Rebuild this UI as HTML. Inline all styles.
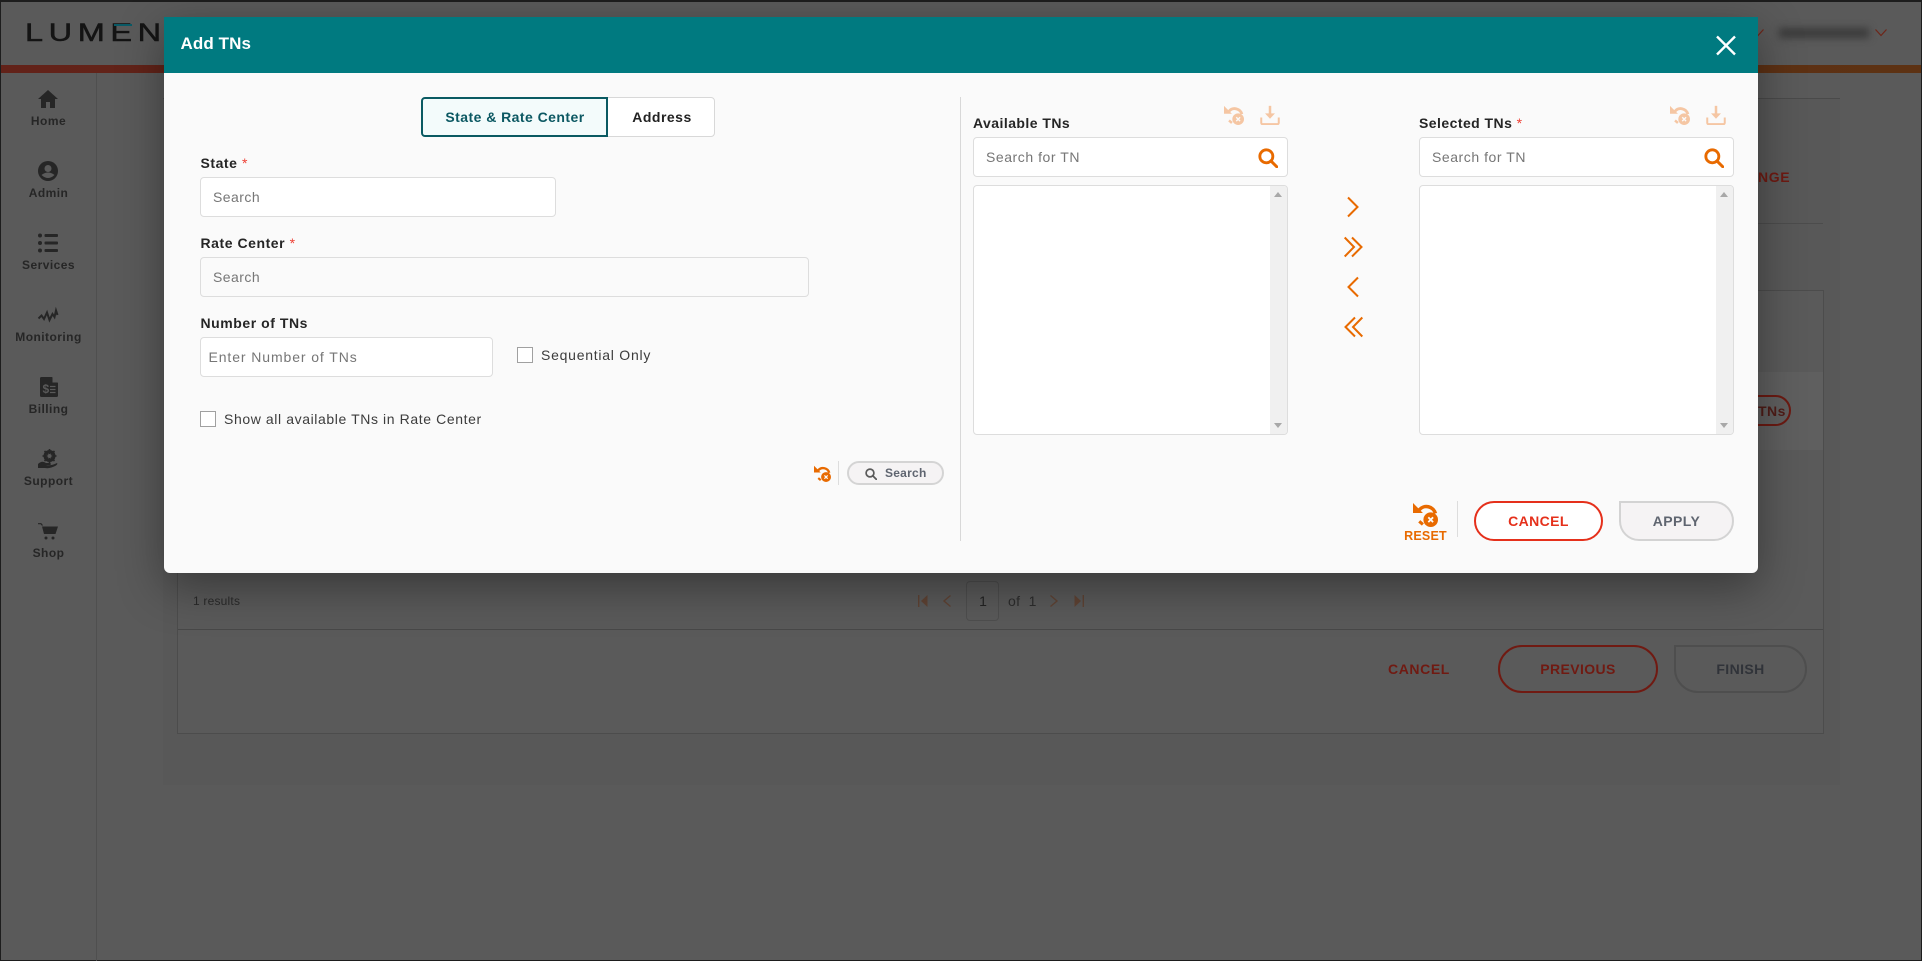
<!DOCTYPE html>
<html><head><meta charset="utf-8"><title>Add TNs</title>
<style>
*{box-sizing:border-box}
html,body{margin:0;padding:0;width:1922px;height:961px;overflow:hidden;background:#5a5a5a}
body{font-family:"Liberation Sans",sans-serif;position:relative}
.a{position:absolute}
.t{position:absolute;white-space:nowrap;line-height:20px;height:20px}
.c{transform:translateX(-50%)}
.side{font-weight:700;font-size:12px;color:#262626;letter-spacing:.45px}
.lab{font-weight:700;font-size:14px;color:#252525;letter-spacing:.55px}
.req{color:#ee4035;font-weight:400}
.inp{position:absolute;background:#fff;border:1px solid #ddd;border-radius:4px}
.ph{font-size:14px;color:#767676;letter-spacing:.55px}
.chk{position:absolute;width:16px;height:16px;background:#fff;border:1px solid #a0a0a0}
.reg{font-size:14px;color:#3c3c3c;letter-spacing:.6px}
.pill{position:absolute;border-radius:24px;text-align:center;font-weight:700;letter-spacing:.4px}
svg{position:absolute;overflow:visible;display:block}
</style></head><body>
<svg width="0" height="0" style="position:absolute">
<symbol id="reset" viewBox="0 0 24 24">
<path d="M6 7.5A9 9 0 0 1 21.5 11" fill="none" stroke="currentColor" stroke-width="3.4"/>
<path d="M0 1L0 10.5L9.5 10.5Z" fill="currentColor"/>
<path d="M6 18.5L9.5 21.5" fill="none" stroke="currentColor" stroke-width="3"/>
<circle cx="17" cy="17" r="7" fill="currentColor"/>
<path d="M14.7 14.7L19.3 19.3M19.3 14.7L14.7 19.3" stroke="#fafafa" stroke-width="1.7"/>
</symbol>
<symbol id="dl" viewBox="0 0 24 24">
<path d="M12 1V12" stroke="currentColor" stroke-width="3" fill="none"/>
<path d="M6 10L18 10L12 16.5Z" fill="currentColor"/>
<path d="M1.5 15V21.5Q1.5 23 3 23H21Q22.5 23 22.5 21.5V15" stroke="currentColor" stroke-width="2.4" fill="none"/>
</symbol>
<symbol id="mag" viewBox="0 0 24 24">
<circle cx="10" cy="10" r="7.8" fill="none" stroke="currentColor" stroke-width="3.4"/>
<path d="M15.5 15.5L22.5 22.5" stroke="currentColor" stroke-width="3.6" stroke-linecap="round"/>
</symbol>
</svg>

<!-- background page -->
<div class="a" style="left:0;top:0;width:1922px;height:961px;border:1px solid #1d1d1d;border-width:2px 1px 1px 1px"></div>
<div class="t" style="left:25px;top:17px;height:32px;line-height:32px;font-size:25px;letter-spacing:4.3px;color:#141414;transform:scaleX(1.3);transform-origin:0 50%;-webkit-text-stroke:.5px #141414">LUMEN</div>
<div class="a" style="left:114px;top:24px;width:18px;height:2px;background:#0a5a66"></div>
<div class="a" style="left:1px;top:65px;width:1920px;height:8px;background:linear-gradient(90deg,#622219,#5f2a17 50%,#5d3213)"></div>
<div class="a" style="left:96px;top:73px;width:1px;height:888px;background:#4f4f4f"></div>
<div class="a" style="left:163px;top:98px;width:1677px;height:687px;background:#585858"></div>
<div class="a" style="left:163px;top:98px;width:1677px;height:1px;background:#4a4a4a"></div>
<div class="a" style="left:1758px;top:223px;width:65px;height:1px;background:#4c4c4c"></div>
<div class="a" style="left:177px;top:290px;width:1647px;height:444px;border:1px solid #4c4c4c;background:#5a5a5a"></div>
<div class="a" style="left:178px;top:372px;width:1645px;height:78px;background:#5f5f5f"></div>
<div class="a" style="left:178px;top:629px;width:1645px;height:1px;background:#484848"></div>
<div class="t" style="left:1758px;top:167px;font-weight:700;font-size:14px;letter-spacing:.6px;color:#6e1a12">NGE</div>
<div class="a" style="left:1740px;top:395px;width:51px;height:31px;border:2px solid #6b1a12;border-radius:16px"></div>
<div class="t" style="left:1758px;top:401px;font-weight:700;font-size:14px;color:#4f1c17;letter-spacing:.5px">TNs</div>
<div class="a" style="left:1779px;top:28px;width:90px;height:10px;background:#3a3a3a;filter:blur(4px)"></div>
<svg style="left:1752px;top:29px" width="12" height="8"><path d="M.5.5L6 6.5L11.5.5" fill="none" stroke="#6e2518" stroke-width="1.2"/></svg>
<svg style="left:1875px;top:29px" width="12" height="8"><path d="M.5.5L6 6.5L11.5.5" fill="none" stroke="#6e2518" stroke-width="1.2"/></svg>
<div class="t" style="left:193px;top:591px;font-size:12px;color:#2a2a2a;letter-spacing:.2px">1 results</div>
<svg style="left:918px;top:595px" width="10" height="12"><path d="M.7 0V12" stroke="#5f4334" stroke-width="1.4"/><path d="M9.5 0V12L3 6Z" fill="#5f4334"/></svg>
<svg style="left:943px;top:595px" width="8" height="12"><path d="M7.5 .5L1 6L7.5 11.5" fill="none" stroke="#5f4334" stroke-width="1.4"/></svg>
<div class="a" style="left:966px;top:581px;width:33px;height:40px;border:1px solid #4e4e4e;border-radius:4px"></div>
<div class="t c" style="left:983px;top:591px;font-size:14px;color:#222">1</div>
<div class="t" style="left:1008px;top:591px;font-size:14px;color:#2c2c2c;letter-spacing:.3px">of&nbsp; 1</div>
<svg style="left:1050px;top:595px" width="8" height="12"><path d="M.5 .5L7 6L.5 11.5" fill="none" stroke="#5f4334" stroke-width="1.4"/></svg>
<svg style="left:1074px;top:595px" width="10" height="12"><path d="M9.3 0V12" stroke="#5f4334" stroke-width="1.4"/><path d="M.5 0V12L7 6Z" fill="#5f4334"/></svg>
<div class="t" style="left:1388px;top:659px;font-weight:700;font-size:14px;color:#701a12;letter-spacing:.6px">CANCEL</div>
<div class="pill" style="left:1498px;top:645px;width:160px;height:48px;border:2px solid #701a12;color:#701a12;font-size:14px;line-height:44px">PREVIOUS</div>
<div class="pill" style="left:1674px;top:645px;width:133px;height:48px;border:2px solid #4e4e4e;border-top-left-radius:0;color:#303339;font-size:14px;line-height:44px">FINISH</div>

<!-- sidebar -->
<svg style="left:38px;top:90px" width="20" height="18" viewBox="0 0 20 18"><path d="M10 0L20 9H17V18H12V12H8V18H3V9H0Z" fill="#262626"/></svg>
<div class="t c side" style="left:48.5px;top:111px">Home</div>
<svg style="left:38px;top:161px" width="20" height="20" viewBox="0 0 20 20"><circle cx="10" cy="10" r="10" fill="#262626"/><circle cx="10" cy="7.5" r="3.5" fill="#5a5a5a"/><path d="M3.5 14Q10 9 16.500 14Q10 20 3.500 14Z" fill="#5a5a5a"/></svg>
<div class="t c side" style="left:48.500px;top:183px">Admin</div>
<svg style="left:38px;top:233px" width="20" height="20" viewBox="0 0 20 20" fill="#262626"><circle cx="2" cy="2.500" r="2"/><circle cx="2" cy="10" r="2"/><circle cx="2" cy="17.500" r="2"/><rect x="6.500" y="1" width="13.500" height="3" rx="1"/><rect x="6.500" y="8.500" width="13.500" height="3" rx="1"/><rect x="6.500" y="16" width="13.500" height="3" rx="1"/></svg>
<div class="t c side" style="left:48.500px;top:255px">Services</div>
<svg style="left:38px;top:309px" width="20" height="13" viewBox="0 0 20 13"><path d="M.5 9.500L3.500 6.500L6 10L9 3.500L11.500 11L14.500 5L16.500 8L18 1.500L19.500 6" fill="none" stroke="#262626" stroke-width="2"/></svg>
<div class="t c side" style="left:48.500px;top:327px">Monitoring</div>
<svg style="left:40px;top:377px" width="18" height="20" viewBox="0 0 18 20"><path d="M1.500 0H12L18 6V18.500Q18 20 16.500 20H1.500Q0 20 0 18.500V1.500Q0 0 1.500 0Z" fill="#262626"/><path d="M12.500 0L18 5.500H12.500Z" fill="#5a5a5a"/><text x="2.500" y="16" font-size="12" font-weight="700" fill="#5a5a5a" font-family="Liberation Sans">$</text><path d="M10 9.500H15.500M10 12.500H15.500M10 15.500H15.500" stroke="#5a5a5a" stroke-width="1.200"/></svg>
<div class="t c side" style="left:48.500px;top:399px">Billing</div>
<svg style="left:38px;top:449px" width="20" height="20" viewBox="0 0 20 20"><circle cx="11.500" cy="7" r="4.500" fill="none" stroke="#262626" stroke-width="3"/><path d="M11.500 0V14M4.500 7H18.500M6.500 2L16.500 12M16.500 2L6.500 12" stroke="#262626" stroke-width="1.600"/><circle cx="11.500" cy="7" r="2" fill="#5a5a5a"/><path d="M0 15Q4 11 8 14H12Q14 15 12 16H8Q13 17 19 14Q20 15 18 16.500Q12 20 7 19L3 19H0Z" fill="#262626"/></svg>
<div class="t c side" style="left:48.500px;top:471px">Support</div>
<svg style="left:38px;top:523px" width="20" height="17" viewBox="0 0 20 17"><path d="M0 .700H3L4.500 2.500" fill="none" stroke="#262626" stroke-width="1.200"/><path d="M4 3.500H20L17.500 11H6Z" fill="#262626"/><circle cx="8" cy="15" r="1.500" fill="#262626"/><circle cx="15" cy="15" r="1.500" fill="#262626"/></svg>
<div class="t c side" style="left:48.500px;top:543px">Shop</div>

<!-- modal -->
<div class="a" style="left:164px;top:17px;width:1594px;height:556px;background:#fafafa;border-radius:0 0 6px 6px;box-shadow:0 14px 45px rgba(0,0,0,.38)"></div>
<div class="a" style="left:164px;top:17px;width:1594px;height:56px;background:#007a80"></div>
<div class="t" style="left:180.500px;top:34px;font-weight:700;font-size:17px;color:#fff;letter-spacing:.1px">Add TNs</div>
<svg style="left:1716px;top:36px" width="20" height="19"><path d="M1 .500L19 18.500M19 .500L1 18.500" stroke="#fff" stroke-width="2.400"/></svg>

<!-- tabs -->
<div class="a" style="left:606px;top:97px;width:109px;height:40px;background:#fff;border:1px solid #d8d8d8;border-radius:0 4px 4px 0"></div>
<div class="a" style="left:421px;top:97px;width:187px;height:40px;background:#f3fbfb;border:2px solid #0a5a62;border-radius:4px 0 0 4px"></div>
<div class="t c" style="left:515px;top:107px;font-weight:700;font-size:14px;color:#0b5862;letter-spacing:.45px">State &amp; Rate Center</div>
<div class="t c" style="left:662px;top:107px;font-weight:700;font-size:14px;color:#222;letter-spacing:.5px">Address</div>

<!-- left form -->
<div class="t lab" style="left:200.500px;top:153px">State <span class="req">*</span></div>
<div class="inp" style="left:200px;top:177px;width:356px;height:40px"></div>
<div class="t ph" style="left:213px;top:187px;letter-spacing:.45px">Search</div>
<div class="t lab" style="left:200.500px;top:233px">Rate Center <span class="req">*</span></div>
<div class="inp" style="left:200px;top:257px;width:609px;height:40px;background:#fafafa"></div>
<div class="t ph" style="left:213px;top:267px;letter-spacing:.45px">Search</div>
<div class="t lab" style="left:200.500px;top:313px">Number of TNs</div>
<div class="inp" style="left:200px;top:337px;width:293px;height:40px"></div>
<div class="t ph" style="left:208.500px;top:347px;letter-spacing:.9px">Enter Number of TNs</div>
<div class="chk" style="left:517px;top:347px"></div>
<div class="t reg" style="left:541px;top:345px;letter-spacing:.75px">Sequential Only</div>
<div class="chk" style="left:200px;top:411px"></div>
<div class="t reg" style="left:224px;top:409px;letter-spacing:.6px">Show all available TNs in Rate Center</div>
<svg style="left:814px;top:465px;color:#e86a00" width="17" height="17"><use href="#reset" width="17" height="17"/></svg>
<div class="a" style="left:838px;top:461px;width:1px;height:24px;background:#ddd"></div>
<div class="pill" style="left:847px;top:461px;width:97px;height:24px;border:2px solid #d4d4d4;background:#f5f3f4"></div>
<svg style="left:865px;top:468px;color:#5a5a5a" width="12" height="12"><use href="#mag" width="12" height="12"/></svg>
<div class="t" style="left:885px;top:463px;font-weight:700;font-size:12px;color:#5f6570;letter-spacing:.25px">Search</div>
<div class="a" style="left:960px;top:97px;width:1px;height:444px;background:#d8d8d8"></div>

<!-- available -->
<div class="t lab" style="left:973px;top:113px;letter-spacing:.45px">Available TNs</div>
<svg style="left:1224px;top:105px;color:#f5c6a3" width="20" height="20"><use href="#reset" width="20" height="20"/></svg>
<svg style="left:1260px;top:105px;color:#f5c6a3" width="20" height="20"><use href="#dl" width="20" height="20"/></svg>
<div class="inp" style="left:973px;top:137px;width:315px;height:40px"></div>
<div class="t ph" style="left:986px;top:147px">Search for TN</div>
<svg style="left:1258px;top:148px;color:#e86a00" width="20" height="20"><use href="#mag" width="20" height="20"/></svg>
<div class="inp" style="left:973px;top:185px;width:315px;height:250px;overflow:hidden"><div class="a" style="right:0;top:0;width:17px;height:250px;background:#f0f0f0"></div></div>
<svg style="left:1274px;top:192px" width="8" height="5"><path d="M0 5L4 0L8 5Z" fill="#a8a8a8"/></svg>
<svg style="left:1274px;top:423px" width="8" height="5"><path d="M0 0L4 5L8 0Z" fill="#a8a8a8"/></svg>

<!-- arrows -->
<svg style="left:1347px;top:197px" width="12" height="20"><path d="M1 .500L10.500 10L1 19.500" fill="none" stroke="#e86a00" stroke-width="2"/></svg>
<svg style="left:1344px;top:237px" width="19" height="20"><path d="M.700 .500L10 10L.700 19.500M8 .500L17.500 10L8 19.500" fill="none" stroke="#e86a00" stroke-width="2"/></svg>
<svg style="left:1347px;top:277px" width="12" height="20"><path d="M11 .500L1.500 10L11 19.500" fill="none" stroke="#e86a00" stroke-width="2"/></svg>
<svg style="left:1344px;top:317px" width="19" height="20"><path d="M18.300 .500L9 10L18.300 19.500M11 .500L1.500 10L11 19.500" fill="none" stroke="#e86a00" stroke-width="2"/></svg>

<!-- selected -->
<div class="t lab" style="left:1419px;top:113px;letter-spacing:.45px">Selected TNs <span class="req">*</span></div>
<svg style="left:1670px;top:105px;color:#f5c6a3" width="20" height="20"><use href="#reset" width="20" height="20"/></svg>
<svg style="left:1706px;top:105px;color:#f5c6a3" width="20" height="20"><use href="#dl" width="20" height="20"/></svg>
<div class="inp" style="left:1419px;top:137px;width:315px;height:40px"></div>
<div class="t ph" style="left:1432px;top:147px">Search for TN</div>
<svg style="left:1704px;top:148px;color:#e86a00" width="20" height="20"><use href="#mag" width="20" height="20"/></svg>
<div class="inp" style="left:1419px;top:185px;width:315px;height:250px;overflow:hidden"><div class="a" style="right:0;top:0;width:17px;height:250px;background:#f0f0f0"></div></div>
<svg style="left:1720px;top:192px" width="8" height="5"><path d="M0 5L4 0L8 5Z" fill="#a8a8a8"/></svg>
<svg style="left:1720px;top:423px" width="8" height="5"><path d="M0 0L4 5L8 0Z" fill="#a8a8a8"/></svg>

<!-- footer -->
<svg style="left:1413px;top:502px;color:#e86a00" width="25" height="25"><use href="#reset" width="25" height="25"/></svg>
<div class="t c" style="left:1425.500px;top:526px;height:20px;font-weight:700;font-size:12.500px;color:#e86a00;letter-spacing:.2px">RESET</div>
<div class="a" style="left:1457px;top:501px;width:1px;height:36px;background:#ddd"></div>
<div class="pill" style="left:1474px;top:501px;width:129px;height:40px;border:2px solid #e5301b;background:#fff;color:#e5301b;font-size:14px;line-height:36px">CANCEL</div>
<div class="pill" style="left:1619px;top:501px;width:115px;height:40px;border:2px solid #d3d3d3;border-top-left-radius:0;background:#f5f3f4;color:#5f6570;font-size:14px;line-height:36px">APPLY</div>
</body></html>
